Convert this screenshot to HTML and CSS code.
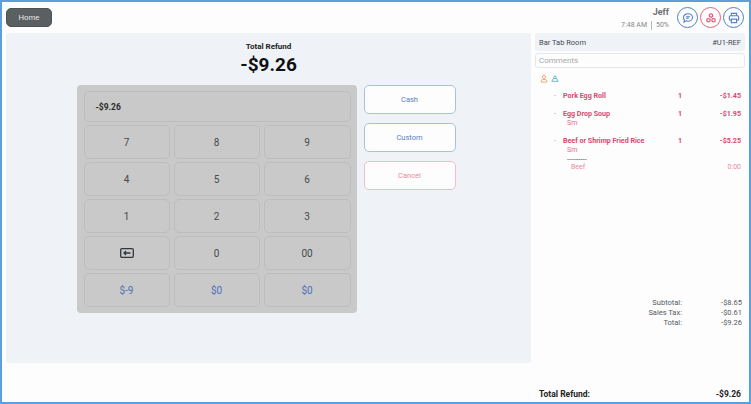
FILE: index.html
```html
<!DOCTYPE html>
<html lang="en">
<head>
<meta charset="utf-8">
<title>Refund</title>
<link rel="stylesheet" href="styles.css">
</head>
<body>
<div class="frame">
  <header class="top">
    <button class="home">Home</button>
    <div class="user">
      <div class="user-text">
        <div class="user-name">Jeff</div>
        <div class="user-meta"><span>7:48 AM</span><span class="sep"></span><span>50%</span></div>
      </div>
      <span class="round blue">
        <svg viewBox="0 0 16 16" width="12" height="12" fill="none" stroke="currentColor" stroke-width="1.4"><path d="M8 2.200c3.400 0 6 2.200 6 5s-2.600 5-6 5c-.9 0-1.700-.1-2.400-.4L2.600 13.600l.7-2.800C2.500 9.900 2 8.600 2 7.200c0-2.800 2.600-5 6-5z"/><path d="M5.500 6.300h5M5.500 8.300h3.500"/></svg>
      </span>
      <span class="round red">
        <svg viewBox="0 0 16 16" width="12" height="12" fill="none" stroke="currentColor" stroke-width="1.700"><circle cx="8" cy="4.700" r="2.300"/><circle cx="4.600" cy="11" r="2.300"/><circle cx="11.400" cy="11" r="2.300"/></svg>
      </span>
      <span class="round blue">
        <svg viewBox="0 0 16 16" width="12" height="12" fill="none" stroke="currentColor" stroke-width="1.500"><path d="M4.500 5V1.800h7V5"/><rect x="1.800" y="5" width="12.400" height="6" rx="1.500"/><rect x="4.500" y="9.500" width="7" height="4.700" fill="#fdfdfd"/></svg>
      </span>
    </div>
  </header>
  <main class="content">
    <section class="left">
      <div class="total-label">Total Refund</div>
      <div class="total-value">-$9.26</div>
      <div class="pay">
        <div class="keypad">
          <div class="display">-$9.26</div>
          <div class="keys">
            <button class="key">7</button><button class="key">8</button><button class="key">9</button>
            <button class="key">4</button><button class="key">5</button><button class="key">6</button>
            <button class="key">1</button><button class="key">2</button><button class="key">3</button>
            <button class="key">
              <svg viewBox="0 0 14 10" width="14" height="10" fill="none" stroke="#33373b" stroke-width="1.300"><rect x=".7" y=".7" width="12.600" height="8.600" rx="1.200"/><path d="M10.500 5H4M6 3L4 5l2 2"/></svg>
            </button>
            <button class="key">0</button><button class="key">00</button>
            <button class="key quick">$-9</button><button class="key quick">$0</button><button class="key quick">$0</button>
          </div>
        </div>
        <div class="actions">
          <button class="action">Cash</button>
          <button class="action">Custom</button>
          <button class="action cancel">Cancel</button>
        </div>
      </div>
    </section>
    <aside class="right">
      <div class="ticket-head"><span>Bar Tab Room</span><span>#U1-REF</span></div>
      <div class="comments">Comments</div>
      <div class="tags">
        <svg viewBox="0 0 10 10" width="8" height="9" fill="none" stroke="#e9a467" stroke-width="1.100"><circle cx="5" cy="3" r="2"/><path d="M1.500 9.500V8c0-1 .8-1.800 1.800-1.800h3.400c1 0 1.800.8 1.800 1.800v1.500z"/></svg>
        <svg viewBox="0 0 10 10" width="8" height="9" fill="none" stroke="#5bb3c4" stroke-width="1.100"><path d="M3.200 5L4 2h2l.8 3"/><path d="M1 8.500L3 5h4l2 3.500z"/></svg>
      </div>
      <div class="items">
        <div class="item">
          <div class="row main"><span class="dash">-</span><span class="name">Pork Egg Roll</span><span class="qty">1</span><span class="price">-$1.45</span></div>
        </div>
        <div class="item">
          <div class="row main"><span class="dash">-</span><span class="name">Egg Drop Soup</span><span class="qty">1</span><span class="price">-$1.95</span></div>
          <div class="sub">Sm</div>
        </div>
        <div class="item">
          <div class="row main"><span class="dash">-</span><span class="name">Beef or Shrimp Fried Rice</span><span class="qty">1</span><span class="price">-$5.25</span></div>
          <div class="sub">Sm</div>
          <div class="divider">----------</div>
          <div class="row mod"><span>Beef</span><span>0:00</span></div>
        </div>
      </div>
      <div class="sums">
        <div class="sum"><span class="sum-k">Subtotal:</span><span class="sum-v">-$8.65</span></div>
        <div class="sum"><span class="sum-k">Sales Tax:</span><span class="sum-v">-$0.61</span></div>
        <div class="sum"><span class="sum-k">Total:</span><span class="sum-v">-$9.26</span></div>
      </div>
    </aside>
  </main>
  <footer class="grand"><span>Total Refund:</span><span>-$9.26</span></footer>
</div>
</body>
</html>
```
FILE: styles.css
```css
* { box-sizing: border-box; }
html, body { margin: 0; height: 100%; }
body { font-family: Roboto, "Noto Sans", sans-serif; background: #fdfdfd; }
button { font-family: inherit; cursor: pointer; }
.frame {
  width: 751px; height: 404px; border: 2px solid #5c9fdf;
  padding: 6px 4px 0; display: flex; flex-direction: column; overflow: hidden;
}
.top { height: 19px; display: flex; justify-content: space-between; align-items: flex-start; }
.home {
  width: 46px; height: 19px; padding: 0; border: 1px solid #4d5254; border-radius: 5px;
  background: #5a5f62; color: #e8e8e8; font-size: 7.800px;
}
.user { display: flex; align-items: flex-start; gap: 2px; margin-top: -1px; padding-right: 1px; }
.user-text { text-align: right; margin-right: 6px; }
.user-name { font-size: 9px; font-weight: 700; color: #6e7175; line-height: 11px; }
.user-meta { display: flex; align-items: center; gap: 4px; font-size: 7px; color: #85888c; line-height: 9px; margin-top: 3px; }
.sep { width: 1px; height: 9px; background: #b4b7ba; }
.round {
  width: 21px; height: 21px; border-radius: 50%; border: 1px solid; background: #fdfdfd;
  display: flex; align-items: center; justify-content: center;
}
.round.blue { color: #4f7fc4; }
.round.red { color: #e0607c; }
.content { display: flex; gap: 4px; margin-top: 6px; height: 330px; }
.left { width: 525px; background: #eff3f8; border-radius: 3px; display: flex; flex-direction: column; align-items: center; padding-top: 9px; }
.total-label { font-size: 8px; font-weight: 700; color: #222; line-height: 10px; }
.total-value { font-size: 19px; font-weight: 700; color: #111; line-height: 24px; margin-top: 1px; }
.pay { display: flex; align-items: flex-start; gap: 7px; margin-top: 8px; width: 379px; margin-left: -5px; }
.keypad { width: 280px; height: 228px; background: #c9c9c9; border-radius: 4px; padding: 6px 6px 6px 7px; }
.display {
  height: 31px; border: 1px solid #bdbdbd; border-radius: 5px; padding-left: 11px;
  display: flex; align-items: center; font-size: 8.500px; font-weight: 700; color: #2a2a2a;
}
.keys { display: grid; grid-template-columns: 86px 86px 87px; grid-auto-rows: 34px; column-gap: 4px; row-gap: 3px; margin-top: 3px; width: 267px; }
.key {
  border: 1px solid #bdbdbd; border-radius: 5px; background: transparent; padding: 0;
  font-size: 10px; color: #45494d; display: flex; align-items: center; justify-content: center;
}
.key.quick { color: #4a72bb; }
.actions { display: flex; flex-direction: column; gap: 9px; }
.action {
  width: 92px; height: 29px; background: #fdfdfd; border: 1px solid #a9c0e0; border-radius: 5px;
  font-size: 7.500px; color: #5a80bd; padding: 0;
}
.action.cancel { border-color: #f0bcc8; color: #e88aa0; }
.right { width: 210px; display: flex; flex-direction: column; }
.ticket-head {
  height: 18px; background: #eff3f8; border-radius: 3px; padding: 0 4px;
  display: flex; justify-content: space-between; align-items: center; font-size: 7.500px; color: #45494d;
}
.comments {
  height: 15px; margin-top: 2px; background: #fdfdfd; border: 1px solid #e4e7eb; border-radius: 3px;
  padding-left: 3px; display: flex; align-items: center; font-size: 8px; color: #a6a9ad;
}
.tags { display: flex; gap: 3px; padding-left: 5px; margin-top: 6px; height: 9px; }
.items { margin-top: 8px; flex: 1; padding-right: 4px; }
.item { margin-bottom: 8px; }
.row { display: flex; align-items: center; }
.main { font-size: 7.100px; font-weight: 700; color: #d9486f; line-height: 10px; }
.dash { width: 9px; margin-left: 19px; color: #9ab0b5; font-weight: 400; }
.name { width: 115px; }
.qty { width: 30px; }
.price { flex: 1; text-align: right; }
.sub { font-size: 7px; color: #e56f8e; line-height: 9px; margin-left: 32px; }
.divider { font-size: 5px; font-weight: 700; color: #444; line-height: 6px; margin-left: 32px; margin-top: 1px; }
.mod { justify-content: space-between; font-size: 7px; color: #e98aa3; line-height: 9px; margin-left: 36px; margin-top: 1px; }
.sums { padding-bottom: 35px; }
.sum { display: flex; justify-content: flex-end; font-size: 7.500px; color: #55595d; line-height: 10px; }
.sum-k { text-align: right; }
.sum-v { width: 63px; text-align: right; padding-right: 3px; }
.grand {
  margin-top: auto; height: 16px; display: flex; justify-content: space-between; align-items: center;
  margin-left: 529px; padding: 0 4px 0 4px; font-size: 8.500px; font-weight: 700; color: #222;
}
```
